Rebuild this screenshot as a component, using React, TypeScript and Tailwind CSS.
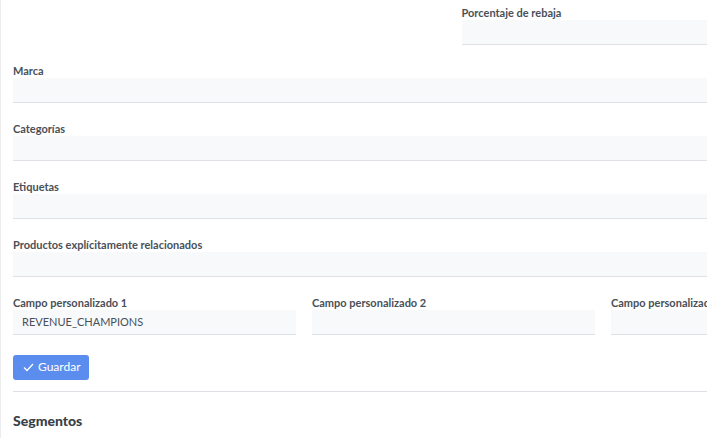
import React from "react";

const font = { fontFamily: "Lato, 'Liberation Sans', sans-serif" };

function Field({ label, value }: { label: string; value?: string }) {
  return (
    <div className="mb-[19.2px]">
      <div className="h-[14px] text-[11px] leading-[14px] font-bold text-[#4a5058] whitespace-nowrap">{label}</div>
      <div className="h-[25px] bg-[#f8f9fb] border-b border-[#dfe2e6] pl-[9px] text-[11px] leading-[24px] text-[#4a5058] whitespace-nowrap overflow-hidden">
        {value}
      </div>
    </div>
  );
}

export default function App() {
  return (
    <div className="w-[707px] h-[438px] overflow-hidden bg-white border-l border-[#ececec]" style={font}>
      <div className="ml-[12px] w-[881px] pt-[5.5px]">
        <div className="grid grid-cols-2 gap-x-4">
          <div />
          <Field label="Porcentaje de rebaja" />
        </div>
        <Field label="Marca" />
        <Field label="Categorías" />
        <Field label="Etiquetas" />
        <Field label="Productos explícitamente relacionados" />
        <div className="grid grid-cols-3 gap-x-4">
          <Field label="Campo personalizado 1" value="REVENUE_CHAMPIONS" />
          <Field label="Campo personalizado 2" />
          <Field label="Campo personalizado 3" />
        </div>
        <div className="flex">
          <button className="flex items-center gap-[4px] h-[25px] pl-[10px] pr-[8px] rounded-[3px] bg-[#5b8def] text-white text-[12px]">
            <svg width="11" height="9" viewBox="0 0 11 9" fill="none" stroke="white" strokeWidth="1.3">
              <path d="M1 4.5 L4 7.5 L10 1" />
            </svg>
            Guardar
          </button>
        </div>
        <div className="mt-[11px] border-t border-[#dcdfe3]" />
        <div className="mt-[18px] text-[14px] font-black text-[#3a4047]">Segmentos</div>
      </div>
    </div>
  );
}
